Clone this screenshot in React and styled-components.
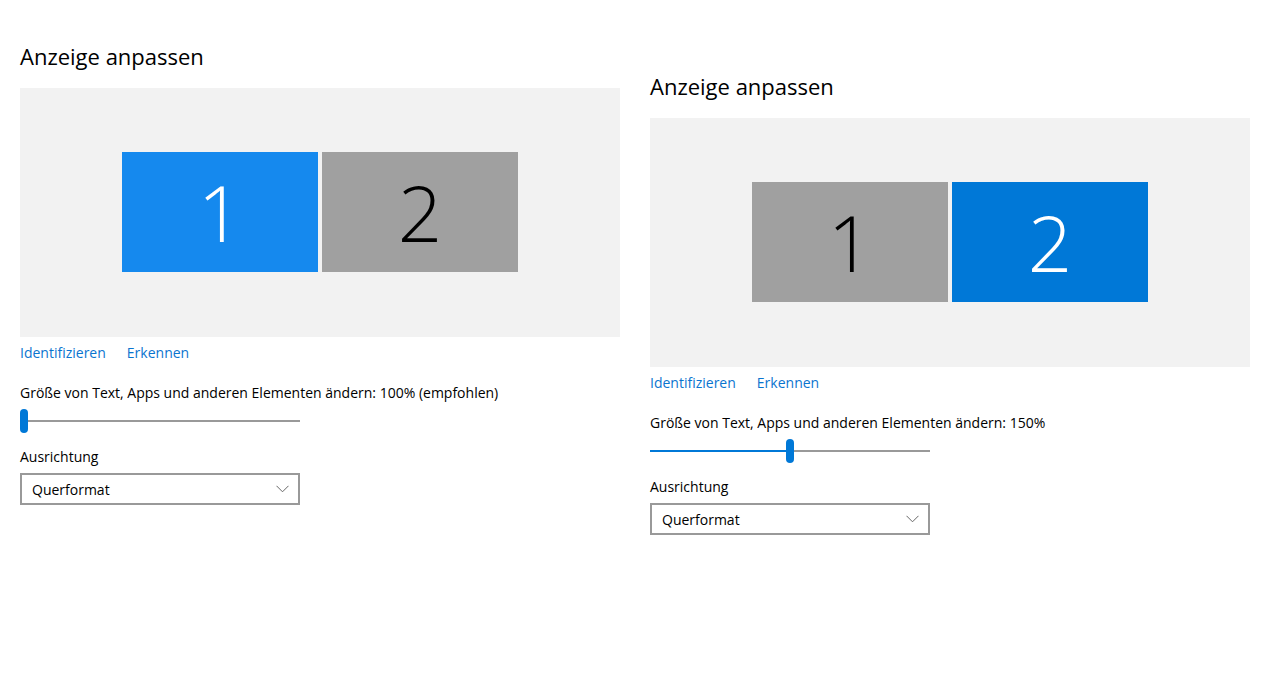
import React from 'react'
import styled, { createGlobalStyle } from 'styled-components'

const GlobalStyle = createGlobalStyle`
  body {
    margin: 0;
    background: #fff;
    font-family: "Open Sans", "Noto Sans", sans-serif;
    color: #000;
  }
`

const Page = styled.div`
  display: flex;
  gap: 30px;
  padding: 40px 20px 0;
  align-items: flex-start;
`

const Column = styled.div`
  width: 600px;
  display: flex;
  flex-direction: column;
  margin-top: ${(p) => p.offset || 0}px;
`

const Heading = styled.h2`
  margin: 0 0 16px;
  font-size: 22px;
  line-height: 32px;
  font-weight: 400;
  letter-spacing: 0;
`

const Preview = styled.div`
  padding: 64px 0 65px;
  background: #f2f2f2;
  display: flex;
  justify-content: center;
  gap: 4px;
`

const Monitor = styled.div`
  width: 196px;
  height: 120px;
  background: ${(p) => p.color};
  color: ${(p) => (p.light ? '#fff' : '#000')};
  display: flex;
  align-items: center;
  justify-content: center;
  font-size: 78px;
  font-weight: 300;
  line-height: 1;
`

const Links = styled.div`
  display: flex;
  gap: 21px;
  margin-top: 6px;
`

const Link = styled.a`
  font-size: 14px;
  line-height: 20px;
  color: #0a74cf;
  cursor: pointer;
`

const Label = styled.div`
  font-size: 14px;
  line-height: 20px;
  margin-top: ${(p) => p.top}px;
`

const Slider = styled.div`
  position: relative;
  width: 280px;
  height: 24px;
  margin-top: 6px;
`

const Track = styled.div`
  position: absolute;
  left: 0;
  right: 0;
  top: 11px;
  height: 2px;
  background: #999;
`

const Fill = styled.div`
  position: absolute;
  left: 0;
  top: 11px;
  height: 2px;
  background: #0078d7;
`

const Thumb = styled.div`
  position: absolute;
  top: 0;
  width: 8px;
  height: 24px;
  border-radius: 4px;
  background: #0078d7;
`

const Select = styled.div`
  margin-top: 6px;
  width: 280px;
  height: 32px;
  box-sizing: border-box;
  border: 2px solid #999;
  display: flex;
  align-items: center;
  justify-content: space-between;
  padding: 0 9px 0 10px;
  font-size: 14px;
`

function Chevron() {
  return (
    <svg width="13" height="8" viewBox="0 0 13 8">
      <path d="M0.5 0.8 L6.5 6.8 L12.5 0.8" fill="none" stroke="#666" strokeWidth="1" />
    </svg>
  )
}

function DisplayPanel({ offset, active, activeColor, scale, value }) {
  return (
    <Column offset={offset}>
      <Heading>Anzeige anpassen</Heading>
      <Preview>
        {[1, 2].map((n) => (
          <Monitor key={n} color={n === active ? activeColor : '#a0a0a0'} light={n === active}>
            {n}
          </Monitor>
        ))}
      </Preview>
      <Links>
        <Link>Identifizieren</Link>
        <Link>Erkennen</Link>
      </Links>
      <Label top={20}>Größe von Text, Apps und anderen Elementen ändern: {scale}</Label>
      <Slider>
        <Track />
        <Fill style={{ width: value * 272 + 'px' }} />
        <Thumb style={{ left: value * 272 + 'px' }} />
      </Slider>
      <Label top={14}>Ausrichtung</Label>
      <Select>
        <span>Querformat</span>
        <Chevron />
      </Select>
    </Column>
  )
}

export default function App() {
  return (
    <>
      <GlobalStyle />
      <Page>
        <DisplayPanel offset={0} active={1} activeColor="#1589ee" scale="100% (empfohlen)" value={0} />
        <DisplayPanel offset={30} active={2} activeColor="#0078d7" scale="150%" value={0.5} />
      </Page>
    </>
  )
}
